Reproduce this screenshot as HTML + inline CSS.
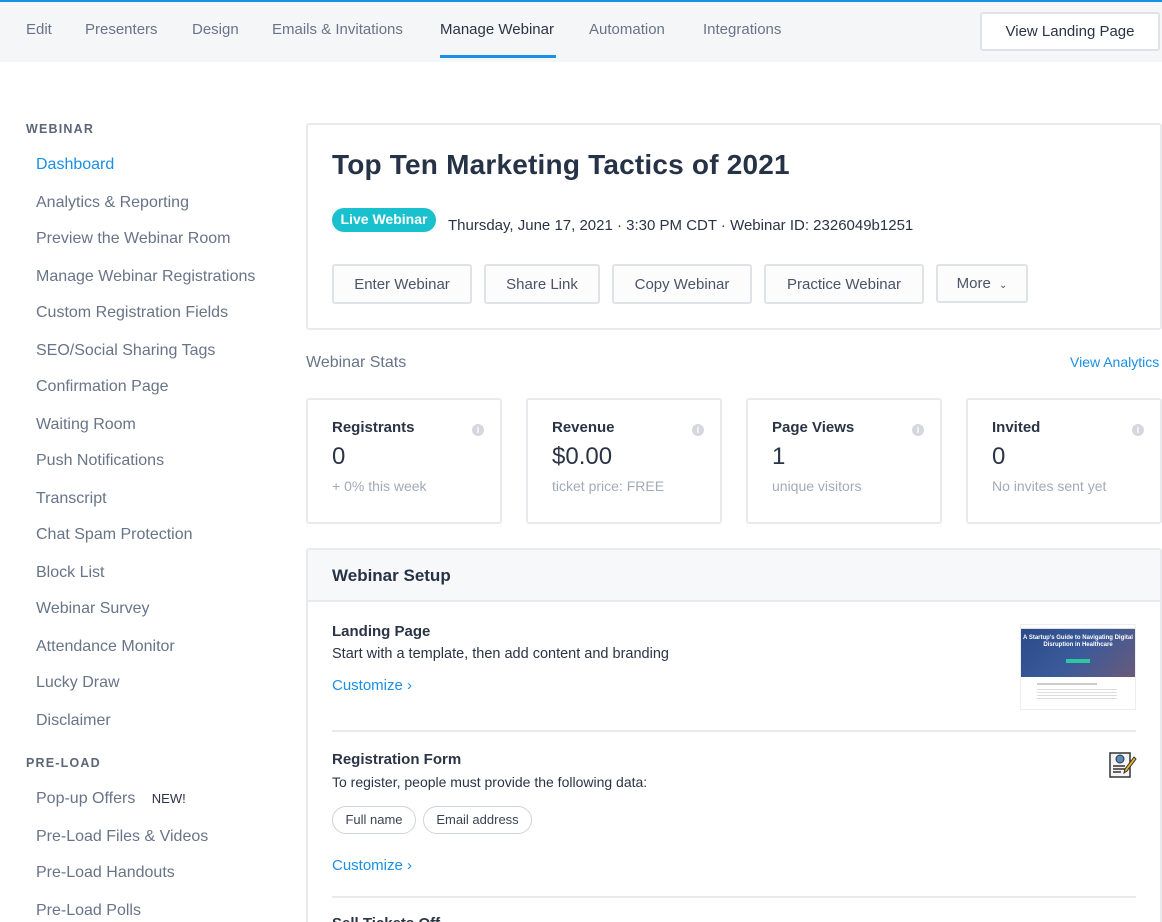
<!DOCTYPE html>
<html><head><meta charset="utf-8"><style>
*{box-sizing:border-box;margin:0;padding:0}
html,body{width:1162px;height:922px;overflow:hidden}
body{background:#fff;font-family:"Liberation Sans",sans-serif;color:#2b3445;position:relative}
.a{position:absolute;white-space:nowrap}
.top{position:absolute;left:0;top:0;width:1162px;height:62px;background:#f5f6f8;border-top:2px solid #1a8fe6}
.nav{font-size:15px;color:#687487;top:21px}
.sb{left:36px;font-size:16px;color:#687487}
.hd{left:26px;font-size:12.5px;font-weight:bold;letter-spacing:1.2px;color:#5c6676}
.card{position:absolute;border:2px solid #e8eaee;border-radius:3px;background:#fff}
.btn{position:absolute;top:264px;height:40px;border:2px solid #dfe2e7;border-radius:3px;background:#fcfcfd;font-size:15px;color:#4a5466;text-align:center;line-height:38px}
.st .t{position:absolute;left:24px;top:19px;font-size:15px;font-weight:bold;color:#2b3445}
.st .v{position:absolute;left:24px;top:43px;font-size:24px;color:#2b3445}
.st .s{position:absolute;left:24px;top:78px;font-size:14px;color:#a3aab7}
.st .i{position:absolute;right:16px;top:24px;width:12px;height:12px;border-radius:50%;background:#d4d8de;color:#fff;font-size:9px;text-align:center;line-height:12px;font-weight:bold}
.pill{position:absolute;top:806px;height:28px;border:1.5px solid #cfd3da;border-radius:14px;font-size:13px;color:#3a4353;line-height:25px;text-align:center}
.lnk{color:#1a8fe6;font-size:15px}
</style></head><body>
<div class="top"></div>
<div class="a nav" style="left:26px">Edit</div>
<div class="a nav" style="left:85px">Presenters</div>
<div class="a nav" style="left:192px">Design</div>
<div class="a nav" style="left:272px">Emails &amp; Invitations</div>
<div class="a nav" style="left:440px;color:#2b3445">Manage Webinar</div>
<div class="a" style="left:440px;top:55px;width:116px;height:3px;background:#1a8fe6"></div>
<div class="a nav" style="left:589px">Automation</div>
<div class="a nav" style="left:703px">Integrations</div>
<div class="a" style="left:980px;top:12px;width:180px;height:39px;border:2px solid #dfe2e7;border-radius:3px;background:#fff;font-size:15px;color:#2b3445;text-align:center;line-height:36px">View Landing Page</div>

<div class="a hd" style="top:122px">WEBINAR</div>
<div class="a sb" style="top:156px;color:#1a8fe6">Dashboard</div>
<div class="a sb" style="top:194px">Analytics &amp; Reporting</div>
<div class="a sb" style="top:230px">Preview the Webinar Room</div>
<div class="a sb" style="top:268px">Manage Webinar Registrations</div>
<div class="a sb" style="top:304px">Custom Registration Fields</div>
<div class="a sb" style="top:342px">SEO/Social Sharing Tags</div>
<div class="a sb" style="top:378px">Confirmation Page</div>
<div class="a sb" style="top:416px">Waiting Room</div>
<div class="a sb" style="top:452px">Push Notifications</div>
<div class="a sb" style="top:490px">Transcript</div>
<div class="a sb" style="top:526px">Chat Spam Protection</div>
<div class="a sb" style="top:564px">Block List</div>
<div class="a sb" style="top:600px">Webinar Survey</div>
<div class="a sb" style="top:638px">Attendance Monitor</div>
<div class="a sb" style="top:674px">Lucky Draw</div>
<div class="a sb" style="top:712px">Disclaimer</div>
<div class="a hd" style="top:756px">PRE-LOAD</div>
<div class="a sb" style="top:790px">Pop-up Offers <span style="font-size:13px;color:#2b3445;margin-left:12px">NEW!</span></div>
<div class="a sb" style="top:828px">Pre-Load Files &amp; Videos</div>
<div class="a sb" style="top:864px">Pre-Load Handouts</div>
<div class="a sb" style="top:902px">Pre-Load Polls</div>

<div class="card" style="left:306px;top:123px;width:856px;height:207px"></div>
<div class="a" style="left:332px;top:149px;font-size:28px;font-weight:bold;color:#263246;letter-spacing:0.2px">Top Ten Marketing Tactics of 2021</div>
<div class="a" style="left:332px;top:208px;width:104px;height:24px;border-radius:12px;background:#18c1cd;color:#fff;font-size:14px;font-weight:bold;text-align:center;line-height:23px">Live Webinar</div>
<div class="a" style="left:448px;top:217px;font-size:15px;color:#2b3445">Thursday, June 17, 2021 · 3:30 PM CDT · Webinar ID: 2326049b1251</div>
<div class="btn" style="left:332px;width:140px">Enter Webinar</div>
<div class="btn" style="left:484px;width:116px">Share Link</div>
<div class="btn" style="left:612px;width:140px">Copy Webinar</div>
<div class="btn" style="left:764px;width:160px">Practice Webinar</div>
<div class="btn" style="left:936px;width:92px;height:39px;line-height:35px">More <span style="font-size:10px;margin-left:4px">&#8964;</span></div>

<div class="a" style="left:306px;top:354px;font-size:16px;color:#687487">Webinar Stats</div>
<div class="a lnk" style="left:1070px;top:354px;font-size:14px">View Analytics</div>

<div class="card st" style="left:306px;top:398px;width:196px;height:126px"><div class="t">Registrants</div><div class="i">i</div><div class="v">0</div><div class="s">+ 0% this week</div></div>
<div class="card st" style="left:526px;top:398px;width:196px;height:126px"><div class="t">Revenue</div><div class="i">i</div><div class="v">$0.00</div><div class="s">ticket price: FREE</div></div>
<div class="card st" style="left:746px;top:398px;width:196px;height:126px"><div class="t">Page Views</div><div class="i">i</div><div class="v">1</div><div class="s">unique visitors</div></div>
<div class="card st" style="left:966px;top:398px;width:196px;height:126px"><div class="t">Invited</div><div class="i">i</div><div class="v">0</div><div class="s">No invites sent yet</div></div>

<div class="card" style="left:306px;top:548px;width:856px;height:400px"></div>
<div class="a" style="left:308px;top:550px;width:852px;height:52px;background:#f7f8fa;border-bottom:2px solid #e8eaee"></div>
<div class="a" style="left:332px;top:566px;font-size:17px;font-weight:bold;color:#263246">Webinar Setup</div>

<div class="a" style="left:332px;top:623px;font-size:15px;font-weight:bold">Landing Page</div>
<div class="a" style="left:332px;top:646px;font-size:14.5px">Start with a template, then add content and branding</div>
<div class="a lnk" style="left:332px;top:677px">Customize &#8250;</div>
<div class="a" style="left:1020px;top:624px;width:116px;height:86px;background:#fff;border:1px solid #eee">
  <div style="height:4px;background:#fff;border-bottom:1px solid #ddd"></div>
  <div style="height:48px;background:linear-gradient(135deg,#2a4a8a,#3a5a9a 50%,#6a5a7a);color:#fff;font-size:6px;font-weight:bold;text-align:center;padding-top:6px;line-height:7px">A Startup's Guide to Navigating Digital<br>Disruption in Healthcare<div style="margin:10px auto 0;width:24px;height:4px;background:#2cc6a0"></div></div>
  <div style="margin:6px 0 0 16px;width:60px;height:2px;background:#ccc"></div>
  <div style="margin:4px 0 0 16px;width:80px;height:10px;background:repeating-linear-gradient(#ddd 0 1px,transparent 1px 3px)"></div>
</div>
<div class="a" style="left:332px;top:730px;width:804px;height:2px;background:#e8eaee"></div>

<div class="a" style="left:332px;top:751px;font-size:15px;font-weight:bold">Registration Form</div>
<div class="a" style="left:332px;top:774px;font-size:14px">To register, people must provide the following data:</div>
<svg class="a" style="left:1109px;top:752px" width="28" height="26" viewBox="0 0 28 26"><rect x="1" y="1" width="20" height="24" fill="#f4f4f4" stroke="#333" stroke-width="1.5"/><circle cx="11" cy="7" r="4" fill="#5a8ac0" stroke="#333"/><line x1="4" y1="14" x2="16" y2="14" stroke="#333" stroke-width="1.5"/><line x1="4" y1="17" x2="16" y2="17" stroke="#333" stroke-width="1.5"/><line x1="4" y1="20" x2="12" y2="20" stroke="#333" stroke-width="1.5"/><path d="M25 5 L27 7 L18 19 L15 21 L16 17 Z" fill="#f0b030" stroke="#333"/></svg>
<div class="pill" style="left:332px;width:84px">Full name</div>
<div class="pill" style="left:423px;width:109px">Email address</div>
<div class="a lnk" style="left:332px;top:857px">Customize &#8250;</div>
<div class="a" style="left:332px;top:896px;width:804px;height:2px;background:#e8eaee"></div>
<div class="a" style="left:332px;top:915px;font-size:15px;font-weight:bold">Sell Tickets Off</div>
</body></html>
